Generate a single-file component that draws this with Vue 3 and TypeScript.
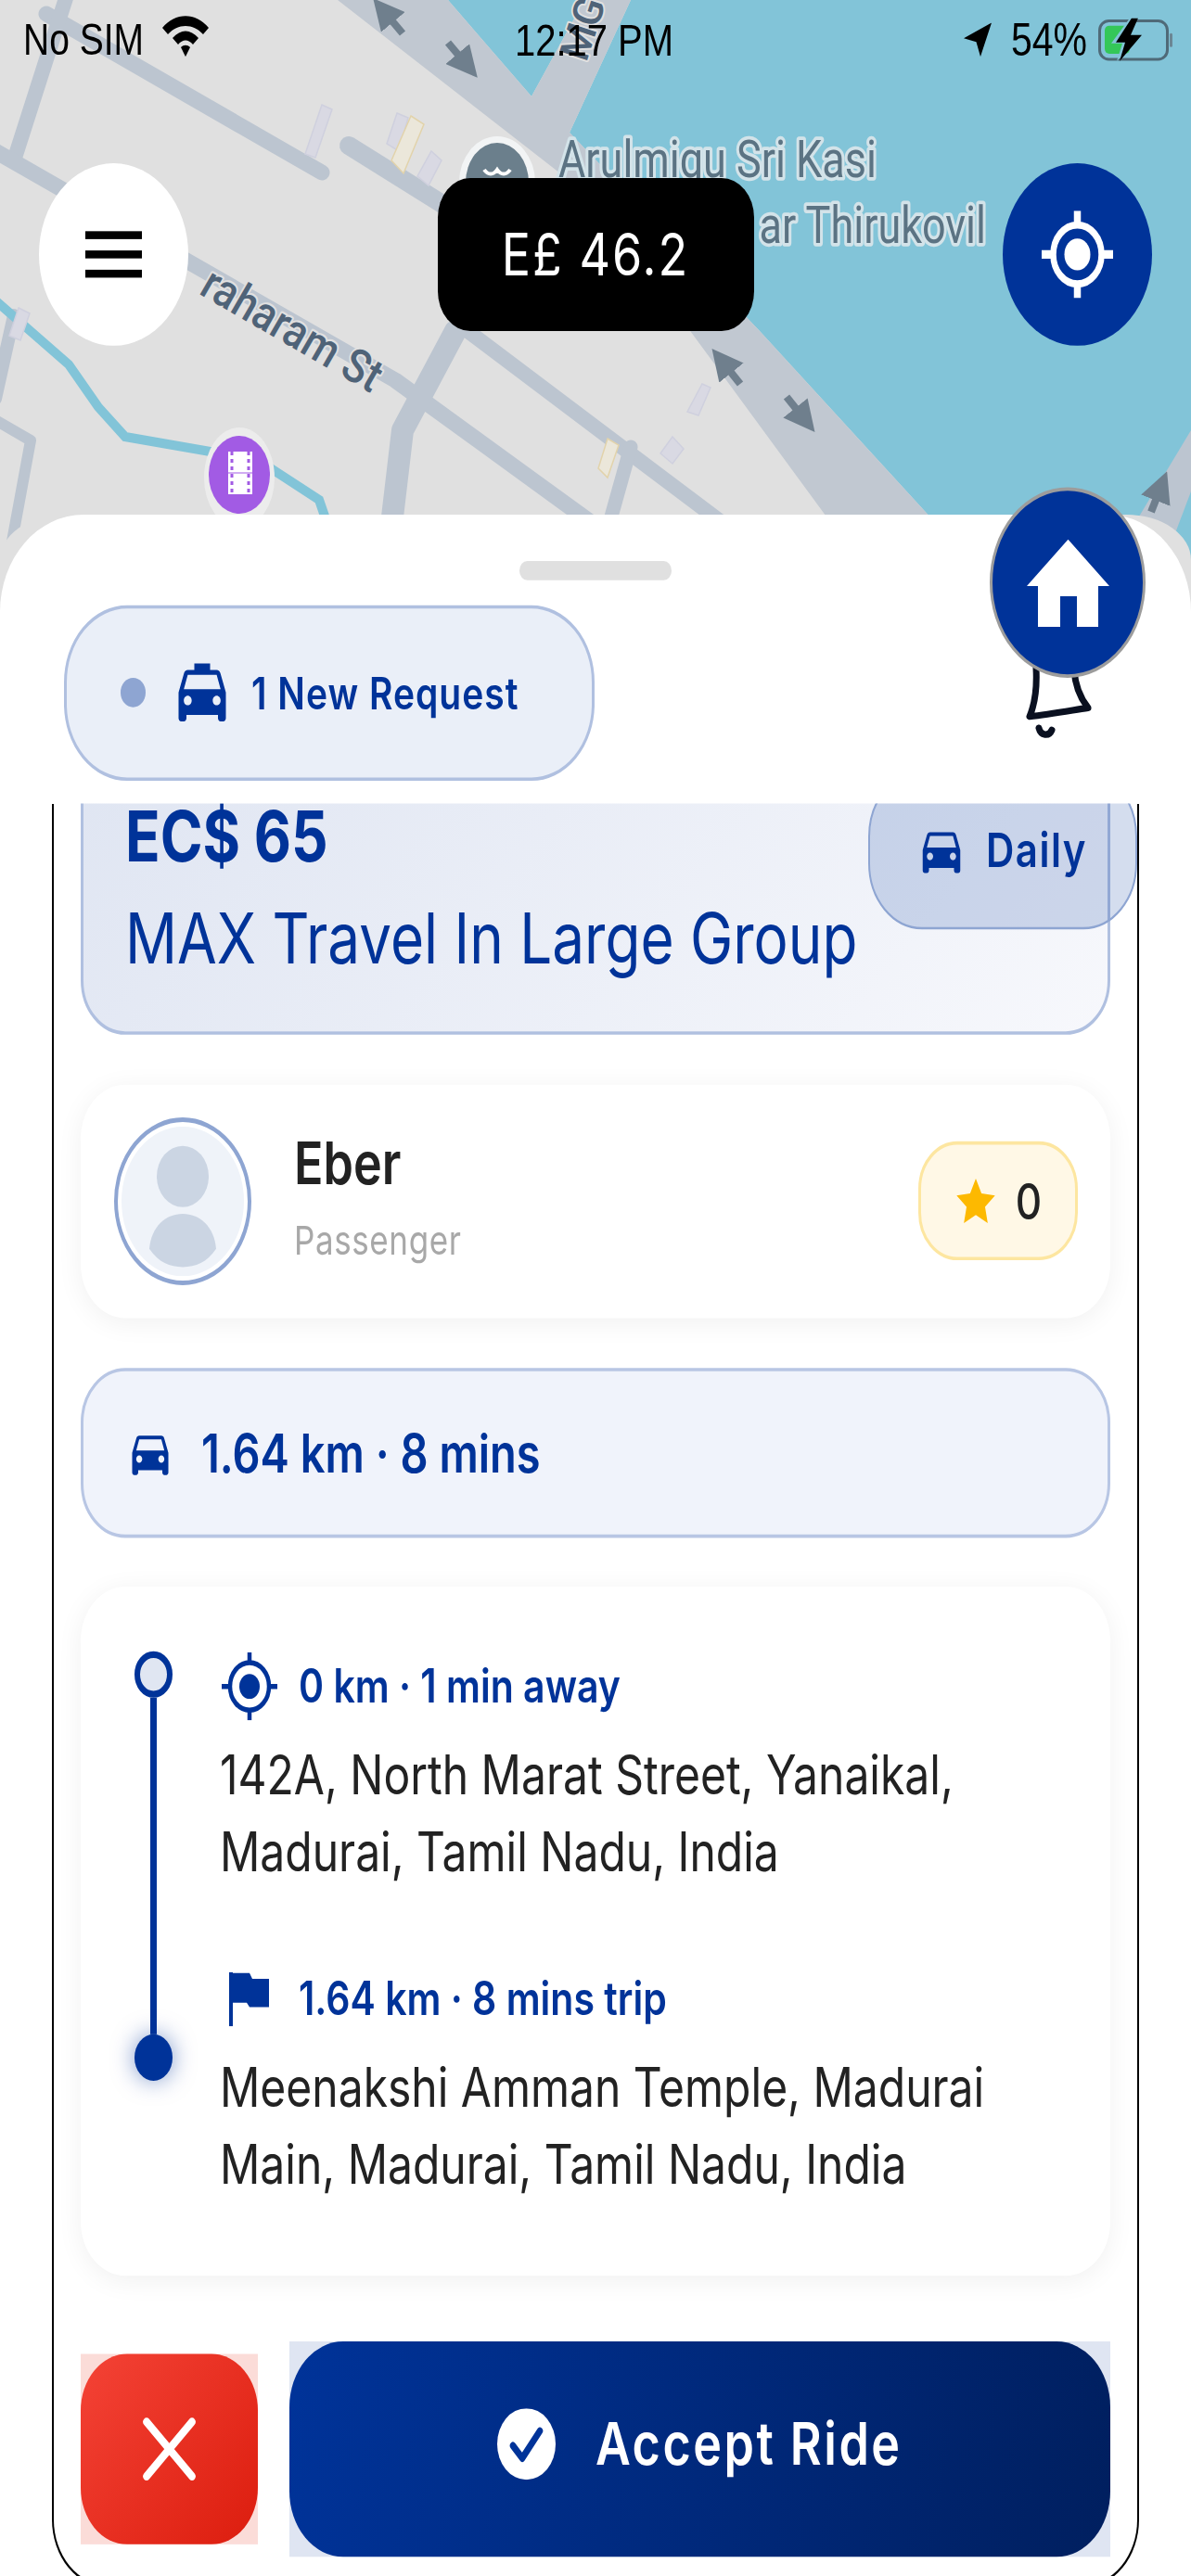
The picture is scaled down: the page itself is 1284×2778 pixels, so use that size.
<script setup lang="ts">
interface Stop {
  meta: string;
  address: string;
  kind: 'pickup' | 'drop';
}

const carPath =
  'M18.92 6.01C18.72 5.42 18.16 5 17.5 5h-11c-.66 0-1.21.42-1.42 1.01L3 12v8c0 .55.45 1 1 1h1c.55 0 1-.45 1-1v-1h12v1c0 .55.45 1 1 1h1c.55 0 1-.45 1-1v-8l-2.08-5.99zM6.5 16c-.83 0-1.5-.67-1.5-1.5S5.67 13 6.5 13s1.5.67 1.5 1.5S7.33 16 6.5 16zm11 0c-.83 0-1.5-.67-1.5-1.5s.67-1.5 1.5-1.5 1.5.67 1.5 1.5-.67 1.5-1.5 1.5zM5 11l1.5-4.5h11L19 11H5z';
const taxiPath =
  'M18.92 6.01C18.72 5.42 18.16 5 17.5 5H15V3H9v2H6.5c-.66 0-1.21.42-1.42 1.01L3 12v8c0 .55.45 1 1 1h1c.55 0 1-.45 1-1v-1h12v1c0 .55.45 1 1 1h1c.55 0 1-.45 1-1v-8l-2.08-5.99zM6.5 16c-.83 0-1.5-.67-1.5-1.5S5.67 13 6.5 13s1.5.67 1.5 1.5S7.33 16 6.5 16zm11 0c-.83 0-1.5-.67-1.5-1.5s.67-1.5 1.5-1.5 1.5.67 1.5 1.5-.67 1.5-1.5 1.5zM5 11l1.5-4.5h11L19 11H5z';

const stops: Stop[] = [
  { kind: 'pickup', meta: '0 km · 1 min away', address: '142A, North Marat Street, Yanaikal, Madurai, Tamil Nadu, India' },
  { kind: 'drop', meta: '1.64 km · 8 mins trip', address: 'Meenakshi Amman Temple, Madurai Main, Madurai, Tamil Nadu, India' },
];
</script>

<template>
  <div class="screen">
    <!-- map is drawn in real pixels, everything else sits on the stretched stage -->
    <svg class="map" viewBox="0 0 1284 620" width="1284" height="620">
      <defs>
        <marker id="arrow" viewBox="0 0 10 10" refX="5" refY="5" markerWidth="4.2" markerHeight="4.2" orient="auto">
          <path d="M0 0L10 5L0 10z" fill="#6f7f8d" />
        </marker>
      </defs>
      <rect width="1284" height="620" fill="#e0e0e0" />
      <path d="M483 0L573 104L630 0H1284V620H1060L819 357L614 143L680 0z" fill="#82c4d8" />
      <path d="M364 0H483L573 104L630 0H680L614 143L819 357L1060 620H937L640 215z" fill="#c1c8d1" />
      <path d="M1190 620L1284 464V530L1250 620z" fill="#bcc5d0" />
      <g fill="none" stroke="#bcc5d0" stroke-linecap="round" stroke-linejoin="round">
        <path d="M50 15L347 186" stroke-width="17" />
        <path d="M72 -5L17 167" stroke-width="16" />
        <path d="M-5 163L426 410L660 580" stroke-width="17" />
        <path d="M376 157L480 222" stroke-width="20" />
        <path d="M495 350L800 580" stroke-width="16" />
        <path d="M491 357L434 464L418 600" stroke-width="24" />
        <path d="M680 482L647 600" stroke-width="15" />
        <path d="M-5 453L33 475L10 600" stroke-width="12" />
        <path d="M15 340L-5 430" stroke-width="14" />
      </g>
      <path d="M-5 324L74 393L106 439L135 471L278 496L344 539L365 600" fill="none" stroke="#82c4d8" stroke-width="10" />
      <g fill="#d9d9e3" stroke="#cfd0de" stroke-width="1.5">
        <path d="M347 113L358 118L340 170L329 166z" />
        <path d="M428 122L440 127L430 163L417 155z" />
        <path d="M465 163L476 173L462 200L450 190z" />
        <path d="M757 414L766 418L753 448L741 444z" />
        <path d="M725 471L737 484L725 500L712 489z" />
        <path d="M20 332L32 338L22 367L10 362z" />
      </g>
      <g fill="#ebe7da" stroke="#e2d3ab" stroke-width="1.5">
        <path d="M443 125L457 134L435 187L422 173z" />
        <path d="M655 473L667 480L655 515L645 505z" />
      </g>
      <g stroke="#6f7f8d" stroke-width="8" marker-end="url(#arrow)">
        <path d="M434 36L413 11" />
        <path d="M483 46L504 71" />
        <path d="M798 414L778 389" />
        <path d="M848 428L868 453" />
        <path d="M1241 552L1252 524" />
      </g>
      <g class="label road" transform="translate(400 424) rotate(30) scale(1 1.15)">
        <text text-anchor="end">raharam St</text>
      </g>
      <g class="label road" transform="translate(632 68) rotate(-72)">
        <text>MG</text>
      </g>
      <ellipse cx="536" cy="197" rx="41" ry="50" fill="#f2f4f5" />
      <ellipse cx="536" cy="197" rx="34" ry="43" fill="#6b7f8c" />
      <path d="M522 183c4 6 10 6 14 0c4 6 10 6 14 0" fill="none" stroke="#fff" stroke-width="4" />
      <g class="label poi">
        <text transform="translate(602 191) scale(1 1.22)">Arulmigu Sri Kasi</text>
        <text transform="translate(1063 262) scale(1 1.22)" text-anchor="end">ar Thirukovil</text>
      </g>
      <ellipse cx="258" cy="515" rx="38" ry="54" fill="#ececec" />
      <ellipse cx="258" cy="512" rx="33" ry="42" fill="#a25be4" />
      <rect x="246" y="487" width="26" height="46" fill="#fff" />
      <path d="M250 487V533M268 487V533" stroke="#a25be4" stroke-width="3" stroke-dasharray="4 4" />
      <path d="M246 510H272" stroke="#a25be4" stroke-width="1" />
    </svg>

    <div class="stage">
      <header class="status">
        <div class="status-left">
          <span>No SIM</span>
          <svg class="wifi" viewBox="0 0 50 44" preserveAspectRatio="none">
            <path d="M0 13C14 -4 36 -4 50 13L44 20C33 8 17 8 6 20z" />
            <path d="M11 24C20 14 30 14 39 24L33 31C28 25 22 25 17 31z" />
            <path d="M20 34C23 31 27 31 30 34L25 44z" />
          </svg>
        </div>
        <span class="clock">12:17 PM</span>
        <div class="status-right">
          <svg class="loc" viewBox="0 0 30 37" preserveAspectRatio="none">
            <path d="M30 0L18 37L13.5 21L0 17z" />
          </svg>
          <span>54%</span>
          <svg class="battery" viewBox="0 0 80 46" preserveAspectRatio="none">
            <rect x="1.5" y="3" width="73" height="41" rx="10" fill="none" stroke="#4f6a78" stroke-width="3" />
            <rect x="7" y="8" width="27" height="30" rx="5" fill="#34c759" />
            <rect x="77" y="16" width="3" height="15" rx="1.5" fill="#6b8694" />
            <path d="M36 0L16 27H28L22 46L49 17H35L44 0z" fill="#82c4d8" transform="translate(-2 0)" />
            <path d="M36 0L19 26H29L23 46L47 18H35L43 0z" fill="#000" />
          </svg>
        </div>
      </header>

      <div class="controls">
        <button class="round menu" type="button" aria-label="Menu">
          <span></span><span></span><span></span>
        </button>
        <div class="price">E£ 46.2</div>
        <button class="round gps" type="button" aria-label="My location">
          <svg viewBox="0 0 77 77" width="77" height="77">
            <circle cx="38.5" cy="38.5" r="26" fill="none" stroke="#fff" stroke-width="6.5" />
            <circle cx="38.5" cy="38.5" r="14" fill="#fff" />
            <path d="M38.5 0V12M38.5 65V77M0 38.5H12M65 38.5H77" stroke="#fff" stroke-width="7.5" />
          </svg>
        </button>
      </div>

      <section class="sheet">
        <div class="sheet-inner">
          <div class="home-wrap">
            <svg class="bell" viewBox="0 0 80 80" preserveAspectRatio="none">
              <path
                d="M16 2C17 20 15 38 9 52C30 50 52 46 72 43C63 32 58 18 57 4M19 64C21 72 30 73 33 66"
                fill="none"
                stroke="#0a1020"
                stroke-width="7"
                stroke-linecap="round"
                stroke-linejoin="round"
              />
            </svg>
            <button class="home" type="button" aria-label="Home">
              <svg viewBox="0 0 89 77" width="89" height="77">
                <path d="M44.5 0L89 41H77V77H54V50H36V77H12V41H0z" fill="#fff" />
              </svg>
            </button>
          </div>

          <div class="handle"></div>

          <div class="requests">
            <span class="req-dot"></span>
            <svg class="req-taxi" viewBox="0 0 24 24"><path :d="taxiPath" /></svg>
            <span>1 New Request</span>
          </div>

          <div class="viewport">
            <div class="fare-card">
              <div class="fare-amount">EC$ 65</div>
              <div class="fare-name">MAX Travel In Large Group</div>
              <div class="type-pill">
                <svg viewBox="0 0 24 24"><path :d="carPath" /></svg>
                <span>Daily</span>
              </div>
            </div>

            <div class="rider-card">
              <div class="avatar">
                <svg viewBox="0 0 132 132" width="132" height="132">
                  <circle cx="66" cy="66" r="66" fill="#eff3f9" />
                  <ellipse cx="66" cy="44" rx="28" ry="27" fill="#cbd5e3" />
                  <path d="M30 108C32 88 48 77 66 77C84 77 100 88 102 108C92 120 80 124 66 124C52 124 40 120 30 108z" fill="#cbd5e3" />
                </svg>
              </div>
              <div class="rider-text">
                <div class="rider-name">Eber</div>
                <div class="rider-role">Passenger</div>
              </div>
              <div class="rating">
                <svg viewBox="0 0 24 24" width="46" height="46">
                  <path d="M12 1.5L15.2 8.4L22.8 9.3L17.2 14.5L18.7 22L12 18.3L5.3 22L6.8 14.5L1.2 9.3L8.8 8.4z" fill="#fdb900" />
                </svg>
                <span>0</span>
              </div>
            </div>

            <div class="distance-card">
              <svg viewBox="0 0 24 24"><path :d="carPath" /></svg>
              <span>1.64 km · 8 mins</span>
            </div>

            <div class="route-card">
              <div class="timeline">
                <span class="node start"></span>
                <span class="line"></span>
                <span class="node end"></span>
              </div>
              <div class="stops">
                <div v-for="stop in stops" :key="stop.kind" class="stop">
                  <div class="stop-meta">
                    <span class="stop-icon">
                      <svg v-if="stop.kind === 'pickup'" viewBox="0 0 60 60" width="60" height="60">
                        <circle cx="30" cy="30" r="21" fill="none" stroke="#003399" stroke-width="4.5" />
                        <circle cx="30" cy="30" r="11" fill="#003399" />
                        <path d="M30 0V9M30 51V60M0 30H9M51 30H60" stroke="#003399" stroke-width="4.5" />
                      </svg>
                      <svg v-else viewBox="0 0 43 48" width="43" height="48">
                        <path d="M0 0H4V48H0z" fill="#003399" />
                        <path d="M3 1H22L25 6H43V31H22L19 27H3z" fill="#003399" />
                      </svg>
                    </span>
                    <span>{{ stop.meta }}</span>
                  </div>
                  <p class="stop-address">{{ stop.address }}</p>
                </div>
              </div>
            </div>

            <div class="actions">
              <div class="cancel-wrap">
                <button class="cancel" type="button" aria-label="Decline">
                  <svg viewBox="0 0 57 56" width="57" height="56">
                    <path d="M4 4L53 52M53 4L4 52" stroke="#fff" stroke-width="7.5" stroke-linecap="round" />
                  </svg>
                </button>
              </div>
              <div class="accept-wrap">
                <button class="accept" type="button">
                  <svg viewBox="0 0 63 63" width="63" height="63">
                    <circle cx="31.5" cy="31.5" r="31.5" fill="#fff" />
                    <path d="M17 33L27 44L46 20" fill="none" stroke="#003399" stroke-width="6.5" stroke-linecap="round" stroke-linejoin="round" />
                  </svg>
                  <span>Accept Ride</span>
                </button>
              </div>
            </div>
          </div>
        </div>
      </section>
    </div>
  </div>
</template>

<style>
html,
body {
  margin: 0;
  background: #fff;
}
</style>

<style scoped>
.screen {
  position: relative;
  width: 1284px;
  height: 2778px;
  overflow: hidden;
  font-family: Inter, "Noto Sans", sans-serif;
  color: #222;
}

.map {
  position: absolute;
  top: 0;
  left: 0;
}

.label text {
  font-family: Roboto, sans-serif;
  paint-order: stroke;
  stroke-linejoin: round;
}

.road text {
  font-size: 44px;
  font-weight: 500;
  fill: #4f6378;
  stroke: #e0e0e0;
  stroke-width: 4px;
}

.poi text {
  font-size: 45px;
  fill: #5b7383;
  stroke: #d3e3e9;
  stroke-width: 6px;
}

/* the whole reference is stretched vertically by this factor */
.stage {
  position: relative;
  display: flex;
  flex-direction: column;
  width: 1284px;
  height: 2273px;
  transform: scale(1, 1.2222);
  transform-origin: top left;
}

.status {
  display: grid;
  grid-template-columns: 1fr auto 1fr;
  align-items: center;
  height: 70px;
  padding: 0 20px;
  font-family: "Liberation Sans", Arial, sans-serif;
  font-size: 39px;
  color: #000;
}

.status-left,
.status-right {
  display: flex;
  align-items: center;
}

.status-left {
  margin-left: 5px;
}

.status-right {
  justify-content: flex-end;
}

.wifi {
  width: 50px;
  height: 36px;
  margin-left: 20px;
  margin-top: -6px;
}

.clock {
  font-size: 40px;
  margin-left: -3px;
}

.loc {
  width: 30px;
  height: 30px;
  margin-right: 21px;
}

.status-right span {
  font-size: 41px;
}

.battery {
  width: 80px;
  height: 38px;
  margin-left: 12px;
}

.controls {
  display: flex;
  align-items: center;
  justify-content: space-between;
  height: 161px;
  padding: 0 42px;
  margin-top: 74px;
}

.round {
  display: flex;
  align-items: center;
  justify-content: center;
  width: 161px;
  height: 161px;
  padding: 0;
  border: none;
  border-radius: 50%;
}

.menu {
  flex-direction: column;
  gap: 10.5px;
  background: #fff;
}

.menu span {
  display: block;
  width: 61px;
  height: 6.5px;
  background: #000;
}

.gps {
  background: #003399;
}

.price {
  display: flex;
  align-items: center;
  justify-content: center;
  width: 341px;
  height: 135px;
  border-radius: 35px;
  background: #000;
  color: #fff;
  font-size: 52px;
  letter-spacing: 2px;
}

.sheet {
  flex: 1;
  margin-top: 149px;
  min-height: 0;
  background: #e0e0e0;
  border-radius: 70px 70px 0 0 / 40px 40px 0 0;
}

.sheet-inner {
  position: relative;
  height: 100%;
  padding-top: 41px;
  box-sizing: border-box;
  background: #fff;
  border-radius: 90px 90px 0 0 / 86px 86px 0 0;
}

.home-wrap {
  position: absolute;
  top: -24px;
  right: 49px;
  width: 168px;
  height: 168px;
}

.bell {
  position: absolute;
  top: 158px;
  left: 34px;
  width: 80px;
  height: 68px;
}

.home {
  position: relative;
  display: flex;
  align-items: center;
  justify-content: center;
  width: 168px;
  height: 168px;
  padding: 0;
  box-sizing: border-box;
  border: 3px solid #9c9c9c;
  border-radius: 50%;
  background: #003399;
}

.handle {
  width: 164px;
  height: 17px;
  margin: 0 auto;
  border-radius: 9px;
  background: #e0e0e0;
}

.requests {
  display: flex;
  align-items: center;
  width: 572px;
  height: 155.5px;
  margin: 21.5px 0 20px 69px;
  padding-left: 58px;
  box-sizing: border-box;
  border: 3px solid #b0c0e0;
  border-radius: 68px;
  background: #eaeff8;
  color: #003399;
  font-size: 39px;
  font-weight: 600;
  letter-spacing: 1px;
}

.req-dot {
  width: 27px;
  height: 26px;
  border-radius: 50%;
  background: #8ea5d2;
}

.req-taxi {
  width: 68px;
  height: 68px;
  margin: 0 19px 0 27px;
  fill: #003399;
}

.viewport {
  display: flex;
  flex-direction: column;
  height: 1574px;
  margin: 0 56px;
  padding: 0 29px;
  box-sizing: border-box;
  overflow: hidden;
  border: 2px solid #000;
  border-top: none;
  border-radius: 0 0 60px 60px;
  background: #fff;
}

.fare-card {
  position: relative;
  flex: none;
  height: 260px;
  margin-top: -56.4px;
  padding: 46px 45px 0;
  box-sizing: border-box;
  border: 3px solid #b0c0e0;
  border-radius: 48px;
  background: linear-gradient(135deg, #dfe5f2, #f7f8fc);
  color: #003399;
}

.fare-amount {
  font-size: 62px;
  font-weight: 700;
  line-height: 72px;
}

.fare-name {
  margin-top: 16px;
  font-size: 62px;
  line-height: 76px;
}

.type-pill {
  position: absolute;
  top: 24px;
  right: -32px;
  display: flex;
  align-items: center;
  gap: 21px;
  width: 290px;
  height: 140px;
  padding-left: 50px;
  box-sizing: border-box;
  border: 2.5px solid #8ea5d2;
  border-radius: 58px;
  background: rgba(0, 51, 153, 0.17);
  font-size: 42px;
  font-weight: 600;
  letter-spacing: 1.5px;
}

.type-pill svg {
  width: 54px;
  height: 54px;
  fill: #003399;
}

.rider-card {
  display: flex;
  flex: none;
  align-items: center;
  height: 206.5px;
  margin-top: 44px;
  padding: 0 35px 0 36px;
  box-sizing: border-box;
  border-radius: 48px;
  background: #fff;
  box-shadow: 0 4px 26px rgba(0, 0, 0, 0.06);
}

.avatar {
  display: flex;
  align-items: center;
  justify-content: center;
  width: 148px;
  height: 148px;
  box-sizing: border-box;
  border: 4px solid #8ea5d2;
  border-radius: 50%;
}

.rider-text {
  flex: 1;
  margin-left: 46px;
  margin-top: -8px;
}

.rider-name {
  font-size: 52px;
  font-weight: 600;
  line-height: 64px;
  color: #222;
}

.rider-role {
  margin-top: 12px;
  font-size: 35px;
  line-height: 46px;
  letter-spacing: 0.6px;
  color: #a8a8a8;
}

.rating {
  display: flex;
  align-items: center;
  justify-content: center;
  gap: 20px;
  width: 172px;
  height: 105px;
  box-sizing: border-box;
  border: 3px solid #fde6a0;
  border-radius: 42px;
  background: #fff8e6;
  font-size: 44px;
  font-weight: 500;
}

.distance-card {
  display: flex;
  flex: none;
  align-items: center;
  height: 149.6px;
  margin-top: 44px;
  padding-left: 46px;
  box-sizing: border-box;
  border: 3px solid #b8c6e4;
  border-radius: 48px;
  background: #f0f3fb;
  color: #003399;
  font-size: 47px;
  font-weight: 600;
}

.distance-card svg {
  width: 52px;
  height: 52px;
  margin-right: 29px;
  fill: #003399;
}

.route-card {
  display: flex;
  flex: none;
  align-items: flex-start;
  height: 608px;
  margin-top: 43.5px;
  padding: 57px 0 0 58px;
  box-sizing: border-box;
  border-radius: 48px;
  background: #fff;
  box-shadow: 0 4px 26px rgba(0, 0, 0, 0.06);
}

.timeline {
  display: flex;
  flex: none;
  flex-direction: column;
  align-items: center;
  width: 41px;
  height: 379px;
}

.node {
  flex: none;
  width: 41px;
  height: 41px;
  box-sizing: border-box;
  border-radius: 50%;
}

.node.start {
  border: 6px solid #003399;
  background: #e0e6f2;
}

.node.end {
  background: #003399;
  box-shadow: 0 0 22px rgba(0, 51, 153, 0.5);
}

.line {
  flex: 1;
  width: 7px;
  background: #003399;
}

.stops {
  display: flex;
  flex-direction: column;
  gap: 65px;
  width: 850px;
  margin-left: 51px;
}

.stop-meta {
  display: flex;
  align-items: center;
  height: 60px;
  color: #003399;
  font-size: 41px;
  font-weight: 600;
}

.stop-icon {
  display: flex;
  align-items: center;
  justify-content: center;
  width: 61px;
  margin: 2px 23px 0 1px;
}

.stop-address {
  margin: 15px 0 0;
  font-size: 48px;
  line-height: 68px;
  color: #222;
}

.actions {
  display: flex;
  flex: none;
  align-items: center;
  gap: 34px;
  margin-top: 58px;
}

.cancel-wrap {
  width: 191px;
  height: 168.5px;
  background: #fbdcd8;
}

.cancel {
  display: flex;
  align-items: center;
  justify-content: center;
  width: 100%;
  height: 100%;
  padding: 0;
  border: none;
  border-radius: 50px;
  background: linear-gradient(135deg, #f44336, #dc1d0e);
}

.accept-wrap {
  width: 887px;
  height: 190px;
  background: #dfe5f2;
}

.accept {
  display: flex;
  align-items: center;
  justify-content: center;
  gap: 43px;
  width: 100%;
  height: 100%;
  padding: 0 0 10px;
  border: none;
  border-radius: 58px;
  background: linear-gradient(100deg, #003399, #001f5f);
  color: #fff;
  font-family: inherit;
  font-size: 52px;
  font-weight: 600;
  letter-spacing: 2.5px;
}
</style>
